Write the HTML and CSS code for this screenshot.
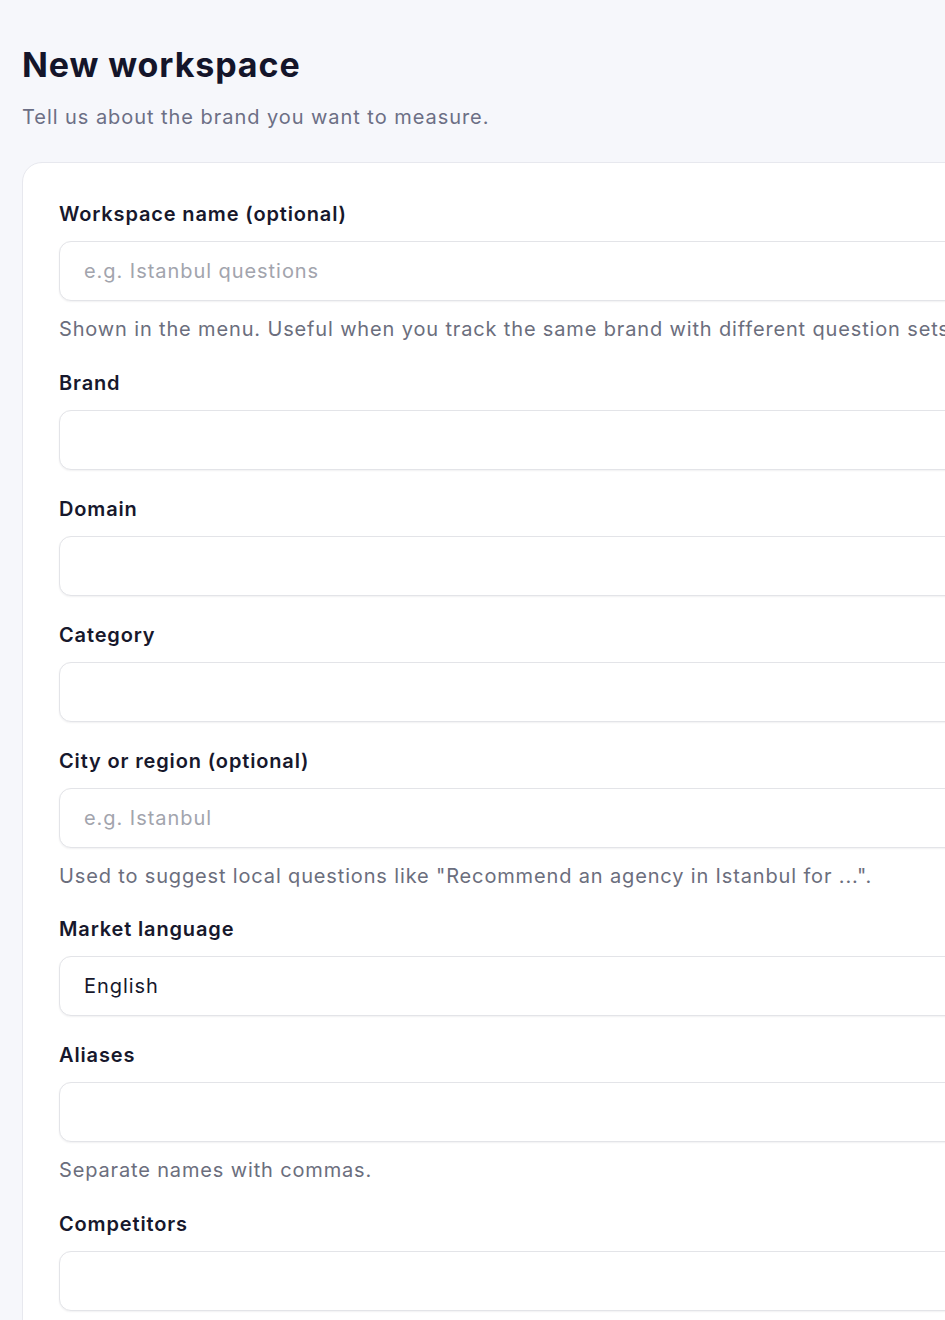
FILE: index.html
```html
<!DOCTYPE html>
<html lang="en">
<head>
<meta charset="utf-8">
<title>New workspace</title>
<link rel="stylesheet" href="styles.css">
</head>
<body>
<main class="page">
  <header class="page-head">
    <h1 class="title">New workspace</h1>
    <p class="subtitle">Tell us about the brand you want to measure.</p>
  </header>
  <form class="card">
    <div class="field">
      <label class="label">Workspace name (optional)</label>
      <input class="input" type="text" placeholder="e.g. Istanbul questions">
      <p class="help">Shown in the menu. Useful when you track the same brand with different question sets.</p>
    </div>
    <div class="field">
      <label class="label">Brand</label>
      <input class="input" type="text">
    </div>
    <div class="field">
      <label class="label">Domain</label>
      <input class="input" type="text">
    </div>
    <div class="field">
      <label class="label">Category</label>
      <input class="input" type="text">
    </div>
    <div class="field">
      <label class="label">City or region (optional)</label>
      <input class="input" type="text" placeholder="e.g. Istanbul">
      <p class="help">Used to suggest local questions like "Recommend an agency in Istanbul for ...".</p>
    </div>
    <div class="field">
      <label class="label">Market language</label>
      <div class="input select">English</div>
    </div>
    <div class="field">
      <label class="label">Aliases</label>
      <input class="input" type="text">
      <p class="help">Separate names with commas.</p>
    </div>
    <div class="field">
      <label class="label">Competitors</label>
      <input class="input" type="text">
    </div>
  </form>
</main>
</body>
</html>
```

FILE: styles.css
```css
html, body {
  margin: 0;
  padding: 0;
  overflow: hidden;
  background: #f6f7fb;
}
body {
  font-family: Inter, "Noto Sans", "DejaVu Sans", sans-serif;
  color: #15162b;
}
.page {
  width: 1240px;
  padding: 45px 0 0 22px;
  box-sizing: border-box;
}
.page-head {
  margin-bottom: 31px;
}
.title {
  margin: 0 0 18px;
  font-size: 34px;
  line-height: 40px;
  font-weight: 700;
  letter-spacing: 0.9px;
  color: #14152a;
}
.subtitle {
  margin: 0;
  font-size: 20px;
  line-height: 28px;
  color: #6c6f85;
  letter-spacing: 0.95px;
}
.card {
  background: #ffffff;
  border: 1px solid #e7e8ee;
  border-radius: 20px;
  padding: 37px 36px 40px;
  display: flex;
  flex-direction: column;
  gap: 25px;
}
.field {
  display: flex;
  flex-direction: column;
}
.label {
  font-size: 20px;
  line-height: 28px;
  font-weight: 600;
  color: #17182c;
  letter-spacing: 0.85px;
  margin-bottom: 13px;
}
.input {
  box-sizing: border-box;
  height: 60px;
  width: 100%;
  border: 1px solid #e3e4e8;
  border-radius: 12px;
  background: #ffffff;
  box-shadow: 0 1px 2px rgba(16, 24, 40, 0.06);
  padding: 0 24px;
  font-family: inherit;
  font-size: 20px;
  color: #17182c;
  letter-spacing: 0.95px;
  outline: none;
}
.input::placeholder {
  color: #a2a4ad;
}
.select {
  display: flex;
  align-items: center;
}
.help {
  margin: 14px 0 0.5px;
  font-size: 20px;
  line-height: 28px;
  color: #6b6e7d;
  letter-spacing: 0.85px;
  white-space: nowrap;
}
```
